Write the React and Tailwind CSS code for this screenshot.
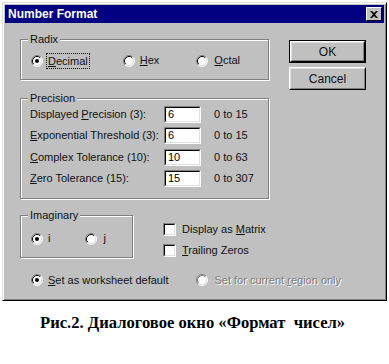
import React from "react";

const F = { fontFamily: '"Liberation Sans", Arial, sans-serif' };

function Radio({ checked, disabled }) {
  return (
    <svg width="12" height="12" viewBox="0 0 12 12" className="shrink-0">
      <circle cx="6" cy="6" r="5" fill="#fff" />
      <path d="M2.11 9.89 A5.5 5.5 0 0 1 9.89 2.11" fill="none" stroke="#808080" strokeWidth="1" />
      <path d="M9.89 2.11 A5.5 5.5 0 0 1 2.11 9.89" fill="none" stroke="#fff" strokeWidth="1" />
      <path d="M2.82 9.18 A4.5 4.5 0 0 1 9.18 2.82" fill="none" stroke={disabled ? "#808080" : "#000"} strokeWidth="1" />
      <path d="M9.18 2.82 A4.5 4.5 0 0 1 2.82 9.18" fill="none" stroke="#dfdfdf" strokeWidth="1" />
      {checked && <circle cx="6" cy="6" r="2" fill="#000" />}
    </svg>
  );
}

function Check() {
  return (
    <div className="w-[13px] h-[13px] shrink-0 border border-t-[#808080] border-l-[#808080] border-b-white border-r-white">
      <div className="w-full h-full bg-white border border-t-black border-l-black border-b-[#dfdfdf] border-r-[#dfdfdf]" />
    </div>
  );
}

function Input({ value }) {
  return (
    <div className="w-[37px] h-[17px] shrink-0 border border-t-[#808080] border-l-[#808080] border-b-white border-r-white">
      <div className="w-full h-full bg-white border border-t-black border-l-black border-b-[#dfdfdf] border-r-[#dfdfdf] pl-[2px] text-[11px] leading-[13px] text-black">
        {value}
      </div>
    </div>
  );
}

function Group({ label, className, children }) {
  return (
    <div className={"relative border border-[#808080] shadow-[inset_1px_1px_0_#fff,1px_1px_0_#fff] " + className}>
      <span className="absolute left-[7px] top-[-8px] bg-[#c0c0c0] px-[2px] text-[11px] leading-[14px] text-[#111]">
        {label}
      </span>
      {children}
    </div>
  );
}

function Button({ children, def }) {
  const inner = (
    <div className="w-full h-full border border-t-white border-l-white border-b-black border-r-black">
      <div className="w-full h-full flex items-center justify-center border border-t-[#dfdfdf] border-l-[#dfdfdf] border-b-[#808080] border-r-[#808080] text-[12px] text-[#111]">
        {children}
      </div>
    </div>
  );
  return def ? (
    <div className="w-[77px] h-[23px] border border-black">{inner}</div>
  ) : (
    <div className="w-[77px] h-[23px]">{inner}</div>
  );
}

const Row = ({ label, value, range, mt }) => (
  <div className={"flex items-center h-[17px] " + mt}>
    <div className="w-[134px] text-[11px] text-[#111]">{label}</div>
    <Input value={value} />
    <div className="ml-[13px] text-[11px] text-[#111]">{range}</div>
  </div>
);

export default function App() {
  return (
    <div className="w-[389px] h-[364px] bg-white pt-[2px] pl-[2px]" style={F}>
      <div className="w-[385px] h-[299px] bg-[#c0c0c0] border border-t-[#dfdfdf] border-l-[#dfdfdf] border-r-black border-b-black shadow-[inset_1px_1px_0_#fff,inset_-1px_-1px_0_#808080] p-[2px]">
        <div className="h-[18px] bg-[#000080] flex items-center justify-between pl-[3px] pr-[2px]">
          <span className="text-white font-bold text-[12px] leading-none">Number Format</span>
          <div className="w-[16px] h-[14px] bg-[#c0c0c0] border border-t-white border-l-white border-b-black border-r-black flex items-center justify-center">
            <svg width="8" height="7" viewBox="0 0 8 7">
              <path d="M0 0h2l2 2 2-2h2L5 3.5 8 7H6L4 5 2 7H0l3-3.5z" fill="#000" />
            </svg>
          </div>
        </div>

        <div className="flex pl-[15px]">
          <div className="w-[249px] mt-[16px]">
            <Group label="Radix" className="h-[41px]">
              <div className="flex items-center h-full pl-[10px] pt-[2px] text-[11px] text-[#111]">
                <Radio checked />
                <span className="ml-[4px] px-[1px] outline outline-1 outline-dotted outline-black leading-[14px]">
                  <span className="underline">D</span>ecimal
                </span>
                <div className="ml-[34px]"><Radio /></div>
                <span className="ml-[5px]"><span className="underline">H</span>ex</span>
                <div className="ml-[37px]"><Radio /></div>
                <span className="ml-[6px]"><span className="underline">O</span>ctal</span>
              </div>
            </Group>

            <Group label="Precision" className="h-[101px] mt-[18px] pl-[9px] pt-[7px]">
              <Row mt="" label={<>Displayed <span className="underline">P</span>recision (3):</>} value="6" range="0 to 15" />
              <Row mt="mt-[4px]" label={<><span className="underline">E</span>xponential Threshold (3):</>} value="6" range="0 to 15" />
              <Row mt="mt-[5px]" label={<><span className="underline">C</span>omplex Tolerance (10):</>} value="10" range="0 to 63" />
              <Row mt="mt-[4px]" label={<><span className="underline">Z</span>ero Tolerance (15):</>} value="15" range="0 to 307" />
            </Group>

            <div className="flex mt-[16px]">
              <Group label="Imaginary" className="w-[113px] h-[43px]">
                <div className="flex items-center h-full pl-[10px] pt-[4px] text-[11px] text-[#111]">
                  <Radio checked />
                  <span className="ml-[5px]">i</span>
                  <div className="ml-[35px]"><Radio /></div>
                  <span className="ml-[6px]">j</span>
                </div>
              </Group>
              <div className="ml-[30px] pt-[8px] text-[11px] text-[#111]">
                <div className="flex items-center h-[13px]">
                  <Check />
                  <span className="ml-[6px]">Display as <span className="underline">M</span>atrix</span>
                </div>
                <div className="flex items-center h-[13px] mt-[8px]">
                  <Check />
                  <span className="ml-[6px]"><span className="underline">T</span>railing Zeros</span>
                </div>
              </div>
            </div>
          </div>

          <div className="ml-[20px] mt-[17px] flex flex-col gap-[4px]">
            <Button def>OK</Button>
            <Button>Cancel</Button>
          </div>
        </div>

        <div className="flex items-center pl-[26px] mt-[15px] text-[11px] h-[14px]">
          <Radio checked />
          <span className="ml-[5px] text-[#111]"><span className="underline">S</span>et as worksheet default</span>
          <div className="ml-[28px]"><Radio disabled /></div>
          <span className="ml-[6px] text-[#7c7c7c] [text-shadow:1px_1px_0_#fff]">
            Set for current <span className="underline">r</span>egion only
          </span>
        </div>
      </div>

      <div
        className="mt-[12px] ml-[38px] text-[16.6px] font-bold text-black whitespace-pre leading-[20px]"
        style={{ fontFamily: '"Liberation Serif", "Times New Roman", serif' }}
      >
        {"Рис.2. Диалоговое окно «Формат  чисел»"}
      </div>
    </div>
  );
}
